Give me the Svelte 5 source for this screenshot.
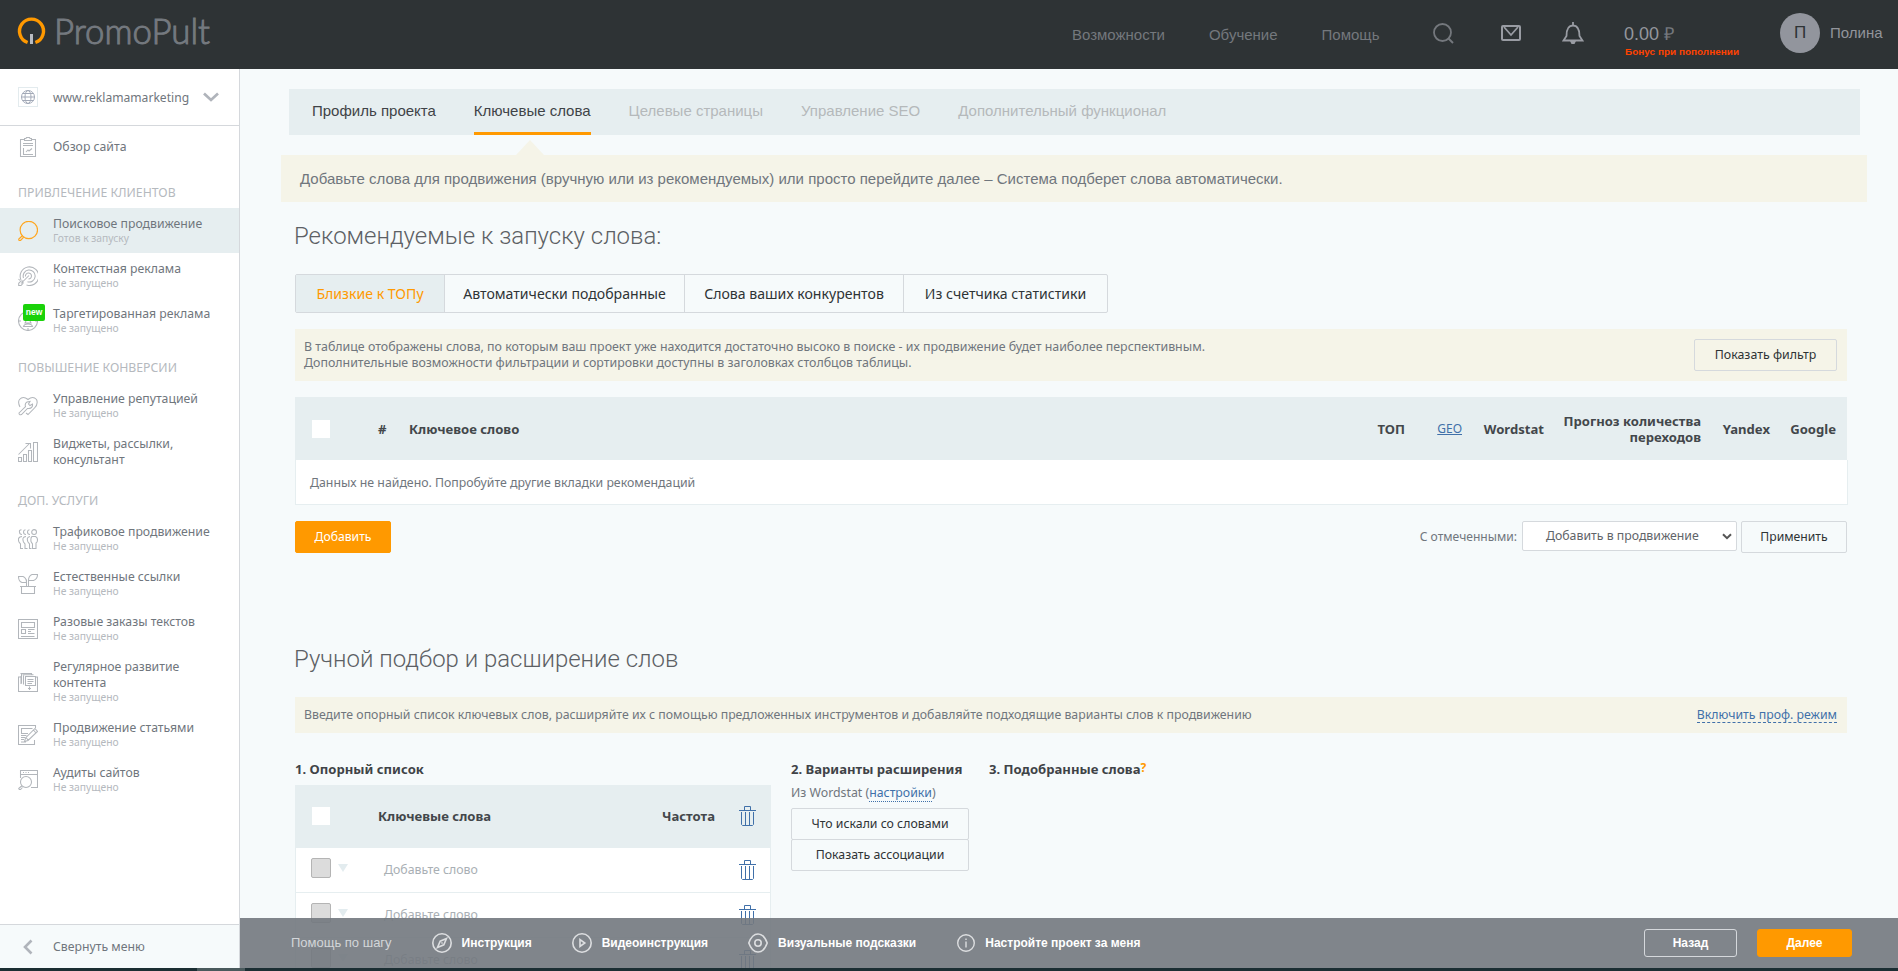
<script lang="ts">
    let menu = [
        { title: "", items: [{ icon: "clipboard", name: "Обзор сайта", status: "" }] },
        { title: "Привлечение клиентов", items: [
            { icon: "search", name: "Поисковое продвижение", status: "Готов к запуску", active: true },
            { icon: "target", name: "Контекстная реклама", status: "Не запущено" },
            { icon: "aim", name: "Таргетированная реклама", status: "Не запущено", isNew: true }
        ]},
        { title: "Повышение конверсии", items: [
            { icon: "heart", name: "Управление репутацией", status: "Не запущено" },
            { icon: "chart", name: "Виджеты, рассылки, консультант", status: "" }
        ]},
        { title: "Доп. услуги", items: [
            { icon: "people", name: "Трафиковое продвижение", status: "Не запущено" },
            { icon: "plant", name: "Естественные ссылки", status: "Не запущено" },
            { icon: "text", name: "Разовые заказы текстов", status: "Не запущено" },
            { icon: "folder", name: "Регулярное развитие контента", status: "Не запущено" },
            { icon: "article", name: "Продвижение статьями", status: "Не запущено" },
            { icon: "audit", name: "Аудиты сайтов", status: "Не запущено" }
        ]}
    ]
    let steps = ["Профиль проекта", "Ключевые слова", "Целевые страницы", "Управление SEO", "Дополнительный функционал"]
    let tabs = ["Близкие к ТОПу", "Автоматически подобранные", "Слова ваших конкурентов", "Из счетчика статистики"]
    let tab = 0
    let rows = [1, 2, 3]

    // 20x20 outlines
    let icons: Record<string, string> = {
        clipboard: "M6.5 2.500H2.500V19.500H17.500V2.500H13.500M6.500 1.500H8L8.500 .5H11.500L12 1.500H13.500V3.500H6.500ZM5 6.500H15M5 8.500H15M5.500 11V17.500H15M8 15L10 13L11 14L14 11.500",
        search: "M19.500 9A8.700 8.700 0 1 1 2.100 9A8.700 8.700 0 1 1 19.500 9ZM5 14.500L3.500 15.500L.8 18Q.5 20 2.500 19.500L5 17L5.700 15.500",
        target: "M3 14A9.300 9.300 0 1 1 8.500 19M5.500 12A6 6 0 1 1 9.500 15.800M7.500 10.500A3 3 0 1 1 10.500 13M11 9.500L3 17.500M3 15L.7 17.300V19.500H3L5 17.300V15ZM.5 13L2 14.500",
        aim: "M19.500 10A9.500 9.500 0 1 1 .5 10A9.500 9.500 0 1 1 19.500 10ZM.5 10H3M17 10H19.500M10 17V19.500M10 4V10M8 7H12V10L13 12H7L8 10ZM5.500 15.500Q6 13 10 13T14.500 15.500Z",
        heart: "M2 11Q-.5 6 1.500 3.500Q5-.5 10 3.500Q15-.5 18.500 3.500Q20.500 8 16.500 12L10 18.500L8 17M1 17L7.500 10.500Q6.500 7.500 9 6L12 5.500L10.500 8L12 9.500L14.500 8Q15 12 11 12.500L9.500 12.500L3.500 18.500Q1 19.500 1 17Z",
        chart: "M.5 15.500H3.500V19.500H.5ZM5.500 12.500H8.500V19.500H5.500ZM10.500 8.500H13.500V19.500H10.500ZM15.500 .5H19.500V19.500H15.500ZM.5 12.500L11 2M7.500 1.500H12.500V6.500",
        people: "M3.500 .8Q1 1 1.500 3Q1.500 5.500 4 5.500M7.500 .8Q5.500 1 5.500 3Q5.500 5.500 8 5.500M11.500 .8Q9.500 1 9.500 3Q9.500 5.500 12 5.500M18.500 3A2.400 2.400 0 1 1 13.700 3A2.400 2.400 0 1 1 18.500 3ZM4 7.500Q-1 8 1 13L2.500 15V19.500H5M8 7.500Q3.500 8 5.500 13L7 15V19.500H9.500M12 7.500Q8 8 10 13L11.500 15V19.500H13.500M14 7.500H17.500Q20.500 9 19 13L18 14V19.500H14.500V15L13 12.500Q12.500 8.500 14 7.500Z",
        plant: "M3.500 12.500H16.500V19.500H3.500ZM.5 2.500H5Q8.500 4 8.500 8.500H4Q.5 7.500 .5 2.500ZM19.500 .5H14Q10.500 2 10.500 6.500H15.500Q19.500 5 19.500 .5ZM8.500 5.500V12M10.500 6V12M2 12.500H18",
        text: "M.5 .5H19.500V19.500H.5ZM3.500 3.500H16.500V8.500H3.500ZM3.500 10.500H7.500V14.500H3.500ZM10 10.500H16.500M10 12.500H13M10 14.500H16.500M3 17.500H16.500",
        folder: "M3 5H.5V19.500H19.500V5H18M3.500 2V11.500M5.500 3.500V12.500M2.500 1.500H13.500V3M4.500 2.800H15.500M7.500 4.500H17.500V13.500H7.500ZM9.500 7.500H15.500M9.500 9.500H15.500M9.500 11.500H14M3 4V12M11.500 14.500V18M10 16.500H13",
        article: "M17.500 3V.5H.5V19.500H16.500V15M14.500 3.500H3.500V8.500H10M3 10.500H8.500M3 12.500H7M3 14.500H6M3 17H8M17 3.500L19.500 6.500L10 15.500L6.500 16.500L7.500 13ZM15.500 5L18 8M8 12.500L10.500 15.500",
        audit: "M2.500 8V.5H19.500V17.500H13M3 4.500H19M5 2.500H6M7.500 2.500H8.500M10 2.500H11M13.500 12A5.500 5.500 0 1 1 2.500 12A5.500 5.500 0 1 1 13.500 12ZM4 16L3 16.500L.7 18.500Q1 20 2.500 19.500L4.500 17.500"
    }
</script>

{#snippet trash()}
    <svg class="trash" width="18" height="20" viewBox="0 0 18 20"><path d="M0 4.500H17M5.500 4.500V.5H11.500V4.500M2.500 6V18.500L3.500 19.500H13.500L14.500 18.500V6M6.500 6V19M10.500 6V19" /></svg>
{/snippet}

<div class="page">
    <header>
        <svg class="logo" width="200" height="56" viewBox="0 0 200 56">
            <path d="M10.600 31.500A12 12 0 1 1 18.400 31.500" fill="none" stroke="#ff9900" stroke-width="3.400" />
            <path d="M14.500 23V33" stroke="#b9bcc2" stroke-width="3" />
            <text x="37" y="32.500" textLength="156" lengthAdjust="spacingAndGlyphs">PromoPult</text>
        </svg>
        <nav>
            <span>Возможности</span>
            <span>Обучение</span>
            <span>Помощь</span>
        </nav>
        <svg class="h-search" width="22" height="22" viewBox="0 0 22 22"><circle cx="9.500" cy="9.500" r="8.500" stroke-width="1.800" /><path d="M15.500 15.500L20 20" stroke-width="2" /></svg>
        <svg class="h-mail" width="20" height="16" viewBox="0 0 20 16"><rect x="1" y="1" width="18" height="14" rx="1" stroke-width="2" /><path d="M3 2L10 10L17 2" stroke-width="1.800" /></svg>
        <svg class="h-bell" width="22" height="22" viewBox="0 0 22 22"><path d="M1.500 18.500L4.500 14Q4.500 3.500 11 3.500Q17.500 3.500 17.500 14L20.500 18.500ZM11 0V4" stroke-width="1.800" /><path d="M8 19H14L12.500 22H9.500Z" class="fill" /></svg>
        <div class="balance">
            <span>0.00 <i>₽</i></span>
            <b>Бонус при пополнении</b>
        </div>
        <div class="avatar">П</div>
        <span class="user">Полина</span>
    </header>

    <div class="body">
        <aside>
            <div class="site">
                <svg width="20" height="20" viewBox="0 0 20 20"><rect x=".5" y=".5" width="19" height="19" stroke="#e3ebee" /><path d="M16.500 10A6.500 6.500 0 1 1 3.500 10A6.500 6.500 0 1 1 16.500 10ZM13 10A3 6.500 0 1 1 7 10A3 6.500 0 1 1 13 10ZM3.500 10H16.500M4.500 6.500H15.500M4.500 13.500H15.500" stroke="#a3aab8" /></svg>
                <span>www.reklamamarketing</span>
                <svg class="arrow" width="16" height="10" viewBox="0 0 16 10"><path d="M1 1.500L8 8L15 1.500" stroke="#b0b4bb" stroke-width="2.700" /></svg>
            </div>
            <ul>
                {#each menu as group}
                    {#if group.title}
                        <li class="group">{group.title}</li>
                    {/if}
                    {#each group.items as item}
                        <li class="item" class:active={item.active} class:first={!group.title}>
                            <svg width="20" height="20" viewBox="0 0 20 20"><path d={icons[item.icon]} /></svg>
                            {#if item.isNew}<em>new</em>{/if}
                            <div>
                                <span class="name">{item.name}</span>
                                {#if item.status}<span class="status">{item.status}</span>{/if}
                            </div>
                        </li>
                    {/each}
                {/each}
            </ul>
            <div class="collapse">
                <svg width="10" height="16" viewBox="0 0 10 16"><path d="M8.500 1.500L2 8L8.500 14.500" stroke="#b0b4bb" stroke-width="2.600" /></svg>
                <span>Свернуть меню</span>
            </div>
        </aside>

        <main>
            <div class="steps">
                {#each steps as step, i}
                    <span class:done={i < 2} class:current={i == 1}>{step}</span>
                {/each}
            </div>
            <div class="hint">Добавьте слова для продвижения (вручную или из рекомендуемых) или просто перейдите далее – Система подберет слова автоматически.</div>

            <section>
                <h2>Рекомендуемые к запуску слова:</h2>
                <div class="tabs">
                    {#each tabs as name, i}
                        <button class:selected={tab == i} on:click={() => tab = i}>{name}</button>
                    {/each}
                </div>
                <div class="note filter">
                    <p>В таблице отображены слова, по которым ваш проект уже находится достаточно высоко в поиске - их продвижение будет наиболее перспективным.<br>Дополнительные возможности фильтрации и сортировки доступны в заголовках столбцов таблицы.</p>
                    <button class="btn">Показать фильтр</button>
                </div>
                <div class="thead words">
                    <i class="check"></i>
                    <span>#</span>
                    <span>Ключевое слово</span>
                    <span class="right">ТОП</span>
                    <a href="#geo" class="right">GEO</a>
                    <span class="right">Wordstat</span>
                    <span class="right">Прогноз количества переходов</span>
                    <span class="right">Yandex</span>
                    <span class="right">Google</span>
                </div>
                <div class="empty">Данных не найдено. Попробуйте другие вкладки рекомендаций</div>
                <div class="actions">
                    <button class="btn orange">Добавить</button>
                    <span class="label">С отмеченными:</span>
                    <div class="select">
                        <span>Добавить в продвижение</span>
                        <svg width="10" height="7" viewBox="0 0 10 7"><path d="M1 1.200L5 5.200L9 1.200" stroke="#555" stroke-width="2" /></svg>
                    </div>
                    <button class="btn apply">Применить</button>
                </div>
            </section>

            <section class="manual">
                <h2>Ручной подбор и расширение слов</h2>
                <div class="note">
                    <p>Введите опорный список ключевых слов, расширяйте их с помощью предложенных инструментов и добавляйте подходящие варианты слов к продвижению</p>
                    <a href="#prof" class="dotted">Включить проф. режим</a>
                </div>
                <div class="columns">
                    <div class="base">
                        <h3>1. Опорный список</h3>
                        <div class="thead list">
                            <i class="check"></i>
                            <span>Ключевые слова</span>
                            <span class="freq">Частота</span>
                            {@render trash()}
                        </div>
                        {#each rows as row (row)}
                            <div class="row">
                                <i class="box"></i>
                                <i class="tri"></i>
                                <span>Добавьте слово</span>
                                {@render trash()}
                            </div>
                        {/each}
                    </div>
                    <div class="variants">
                        <h3>2. Варианты расширения</h3>
                        <p>Из Wordstat (<a href="#settings" class="dotted">настройки</a>)</p>
                        <button>Что искали со словами</button>
                        <button>Показать ассоциации</button>
                    </div>
                    <div>
                        <h3>3. Подобранные слова<sup>?</sup></h3>
                    </div>
                </div>
            </section>

            <footer>
                <span class="help">Помощь по шагу</span>
                <svg width="20" height="20" viewBox="0 0 20 20"><circle cx="10" cy="10" r="9.200" /><path d="M14.500 5.500L11.800 11.800L5.500 14.500L8.200 8.200ZM9.500 10.500L10.500 9.500" /></svg>
                <b>Инструкция</b>
                <svg width="20" height="20" viewBox="0 0 20 20"><circle cx="10" cy="10" r="9.200" /><path d="M8 6.500V13.500L12.800 10Z" /></svg>
                <b>Видеоинструкция</b>
                <svg width="20" height="20" viewBox="0 0 20 20"><path d="M.8 10Q4 1 10 1T19.200 10Q16 19 10 19T.8 10Z" /><circle cx="10" cy="10" r="3.200" /></svg>
                <b>Визуальные подсказки</b>
                <svg class="info" width="18" height="18" viewBox="0 0 18 18"><circle cx="9" cy="9" r="8.300" /><path d="M9 7.500V13.500M9 4.500V6" /></svg>
                <b>Настройте проект за меня</b>
                <button class="back">Назад</button>
                <button class="next">Далее</button>
            </footer>
        </main>
    </div>
    <div class="taskbar"><i></i></div>
</div>

<style>
:global(body) {
    margin: 0;
    overflow: hidden;
}
.page {
    display: flex;
    flex-direction: column;
    width: 1898px;
    height: 971px;
    overflow: hidden;
    background: #f6fafb;
    font: 12.32px/16px "Noto Sans", Tahoma, sans-serif;
    color: #70767d;
}
.page * {
    box-sizing: border-box;
}
svg {
    fill: none;
    flex: none;
    display: block;
}
button {
    font: inherit;
    margin: 0;
    cursor: pointer;
}
a {
    color: #4070a9;
}
h2, h3, p, ul {
    margin: 0;
    padding: 0;
}
header {
    display: flex;
    flex: none;
    height: 69px;
    background: #2e3335;
    color: #74787d;
    font: 15px/18px "Liberation Sans", Arial, sans-serif;
}
.logo {
    margin: 11px 0 0 17px;
    overflow: visible;
}
.logo text {
    font: 300 35px Lato, sans-serif;
    fill: #74797f;
    stroke: #74797f;
    stroke-width: 1;
}
nav {
    display: flex;
    gap: 44px;
    margin: 26px 0 0 855px;
    width: 308px;
    white-space: nowrap;
}
.h-search {
    stroke: #74787d;
    margin: 23px 0 0 53px;
}
.h-mail, .h-bell {
    stroke: #999ca3;
    margin: 25px 0 0 46px;
}
.h-bell {
    margin: 22px 0 0 41px;
}
.fill {
    fill: #999ca3;
    stroke: none;
}
.balance {
    margin: 24px 0 0 40px;
    width: 156px;
    white-space: nowrap;
}
.balance span {
    display: block;
    font-size: 18px;
    line-height: 20px;
    color: #94979d;
}
.balance i {
    font-style: normal;
    color: #74787d;
}
.balance b {
    display: block;
    margin-left: 1px;
    font-size: 9.97px;
    line-height: 16px;
    color: #ff4200;
}
.avatar {
    width: 40px;
    height: 40px;
    margin-top: 13px;
    border-radius: 50%;
    background: #92959d;
    color: #2e3335;
    font-size: 17px;
    line-height: 40px;
    text-align: center;
}
.user {
    margin: 24px 0 0 10px;
    color: #92959b;
}
.body {
    display: flex;
    flex: none;
    height: 899px;
    overflow: hidden;
}
aside {
    display: flex;
    flex-direction: column;
    width: 240px;
    flex: none;
    background: #fff;
    border-right: 1px solid #d5d8dc;
    font-size: 12.25px;
}
.site {
    display: flex;
    align-items: center;
    height: 57px;
    padding: 0 20px 1px 18px;
    border-bottom: 1px solid #d5d8dc;
}
.site span {
    margin: 2px 0 0 15px;
    font-size: 12.1px;
}
.arrow {
    margin-left: auto;
}
ul {
    list-style: none;
    flex: 1;
}
.group {
    height: 40px;
    padding: 17px 0 0 18px;
    font-size: 12.25px;
    text-transform: uppercase;
    color: #b5b9be;
}
.item {
    display: flex;
    align-items: center;
    position: relative;
    padding: 0 0 0 18px;
}
.item svg {
    stroke: #b2b6bb;
    stroke-width: 1.050;
}
.item div {
    margin-left: 15px;
    width: 165px;
    padding: 8px 0;
}
.item.first {
    height: 42px;
}
.item.active {
    background: #e6eef0;
}
.item.active svg {
    stroke: #ffa61f;
    stroke-width: 1.200;
}
.item em {
    position: absolute;
    left: 23px;
    top: 6px;
    width: 22px;
    height: 17px;
    border-radius: 2px;
    background: #1ad20a;
    color: #fff;
    font: bold 8.500px/16px "Liberation Sans", Arial, sans-serif;
    text-align: center;
}
.name, .status {
    display: block;
}
.status {
    font-size: 10.3px;
    line-height: 13px;
    color: #b5b9be;
}
.collapse {
    display: flex;
    align-items: center;
    height: 44px;
    padding: 0 0 0 23px;
    border-top: 1px solid #d5d8dc;
    background: #f6fafb;
}
.collapse span {
    margin-left: 20px;
}
main {
    position: relative;
    flex: 1;
    padding: 20px 31px 0 41px;
}
.steps {
    display: flex;
    gap: 38px;
    height: 46px;
    margin: 0 7px 0 8px;
    padding: 0 23px;
    background: #e6eef0;
    font: 15px/43px "Liberation Sans", Arial, sans-serif;
    color: #b5b9bb;
}
.steps .done {
    color: #3f4347;
}
.steps .current {
    border-bottom: 3px solid #ff9900;
}
.hint {
    position: relative;
    height: 47px;
    margin-top: 20px;
    padding-left: 19px;
    background: #f5f4e8;
    font: 15px/48px "Liberation Sans", Arial, sans-serif;
}
.hint::before {
    content: "";
    position: absolute;
    left: 235px;
    top: -15px;
    border: 14px solid transparent;
    border-top: 0;
    border-bottom: 15px solid #f5f4e8;
}
section {
    margin: 19px 20px 0 14px;
}
h2 {
    margin-left: -1px;
    font: 300 23.950px/30px Roboto, sans-serif;
    color: #5c6064;
}
.tabs {
    display: inline-grid;
    grid-template-columns: 149px 240px 219px 203px;
    height: 39px;
    margin-top: 23px;
    border: 1px solid #d5d9dd;
    border-radius: 2px;
    vertical-align: top;
}
.tabs button {
    padding: 0;
    border: 0;
    border-right: 1px solid #d5d9dd;
    background: none;
    font-size: 14.1px;
    color: #2e3335;
}
.tabs button:last-child {
    border-right: 0;
}
.tabs .selected {
    background: #e6eef0;
    color: #ff9900;
}
.note {
    display: flex;
    justify-content: space-between;
    align-items: center;
    height: 36px;
    padding: 0 10px 0 9px;
    background: #f5f4e8;
}
.filter {
    height: 52px;
    margin-top: 16px;
    font-size: 12.4px;
}
.btn {
    height: 32px;
    padding: 0;
    border: 1px solid #d5d9dd;
    border-radius: 2px;
    background: none;
    color: #2e3335;
    font-size: 12.2px;
}
.filter .btn {
    width: 143px;
    font-size: 12.4px;
}
.orange {
    width: 96px;
    border-color: #ff9900;
    background: #ff9900;
    color: #fff;
}
.apply {
    width: 106px;
}
.thead {
    display: grid;
    align-items: center;
    height: 63px;
    background: #e6eef0;
    color: #43474b;
    font-weight: bold;
    font-size: 13.1px;
}
.thead a {
    font-weight: normal;
    font-size: 12px;
}
.right {
    text-align: right;
}
.words {
    grid-template-columns: 66px 31px 1fr 60px 57px 82px 157px 69px 66px;
    margin-top: 16px;
    padding: 0 11px 0 17px;
}
.words .right:nth-child(7) {
    padding-left: 17px;
}
.check {
    width: 18px;
    height: 18px;
    background: #fff;
}
.empty {
    height: 45px;
    margin-right: -1px;
    padding-left: 14px;
    border: 1px solid #e6eef0;
    border-top: 0;
    background: #fff;
    line-height: 45px;
}
.actions {
    display: flex;
    margin-top: 16px;
}
.label {
    margin: 8px 5px 0 auto;
    font-size: 12.1px;
}
.select {
    display: flex;
    align-items: center;
    justify-content: space-between;
    width: 215px;
    height: 30px;
    margin-right: 4px;
    padding: 0 4px 0 23px;
    border: 1px solid #d5d9dd;
    border-radius: 2px;
    background: #fff;
    color: #5f6469;
    font-size: 12.3px;
}
.manual {
    margin-top: 91px;
}
.manual .note {
    margin-top: 23px;
}
.dotted {
    text-decoration: none;
    border-bottom: 1px dotted #4070a9;
}
.note .dotted {
    line-height: 14px;
    border-bottom-style: dashed;
}
.columns {
    display: flex;
    margin-top: 28px;
}
h3 {
    font-size: 13.1px;
    line-height: 16px;
    color: #3f4347;
    white-space: nowrap;
}
sup {
    font-size: 12px;
    line-height: 0;
    vertical-align: 2px;
    color: #ff9900;
}
.base {
    width: 476px;
}
.list {
    grid-template-columns: 66px 1fr auto 18px;
    margin-top: 8px;
    padding: 0 14px 1px 17px;
}
.freq {
    margin-right: 24px;
}
.trash {
    stroke: #4070a9;
}
.row {
    display: flex;
    align-items: center;
    height: 45px;
    padding: 0 13px 0 15px;
    border: 1px solid #e6eef0;
    border-top: 0;
    background: #fff;
    color: #a9afb4;
}
.row span {
    margin-left: 36px;
    flex: 1;
}
.box {
    width: 20px;
    height: 20px;
    margin-bottom: 4px;
    border: 1px solid #b4b4b4;
    border-radius: 2px;
    background: #dcdcdc;
}
.tri {
    margin: -4px 0 0 7px;
    border: 5px solid transparent;
    border-top: 8px solid #e3ecef;
    border-bottom: 0;
}
.variants {
    width: 178px;
    margin: 0 20px;
}
.variants p {
    margin: 8px 0 7px;
}
.variants button {
    display: block;
    width: 178px;
    height: 32px;
    margin-bottom: -1px;
    border: 1px solid #d5d9dd;
    border-radius: 2px;
    background: none;
    color: #2e3335;
    font-size: 12.3px;
}
footer {
    position: absolute;
    left: 0;
    right: 0;
    bottom: 0;
    display: flex;
    align-items: center;
    height: 50px;
    padding: 0 46px 0 51px;
    background: rgba(115, 121, 128, .91);
    color: #fff;
    font: 12px/16px "Liberation Sans", Arial, sans-serif;
    white-space: nowrap;
}
footer svg {
    margin: 0 10px 0 40px;
    stroke: #dcdee0;
    stroke-width: 1.600;
}
footer .info {
    margin-left: 41px;
    stroke-width: 1.400;
}
.help {
    font-size: 13px;
    color: #d3d6d9;
}
footer button {
    width: 93px;
    height: 28px;
    border: 1px solid #d5d8dc;
    border-radius: 3px;
    background: none;
    color: #fff;
    font-weight: bold;
}
.back {
    margin-left: auto;
}
footer .next {
    width: 95px;
    margin-left: 20px;
    border-color: #ff9900;
    background: #ff9900;
}
.taskbar {
    flex: none;
    height: 3px;
    padding-left: 197px;
    background: #1b2e33;
}
.taskbar i {
    display: block;
    width: 48px;
    height: 3px;
    background: #4a5a5d;
}
</style>
